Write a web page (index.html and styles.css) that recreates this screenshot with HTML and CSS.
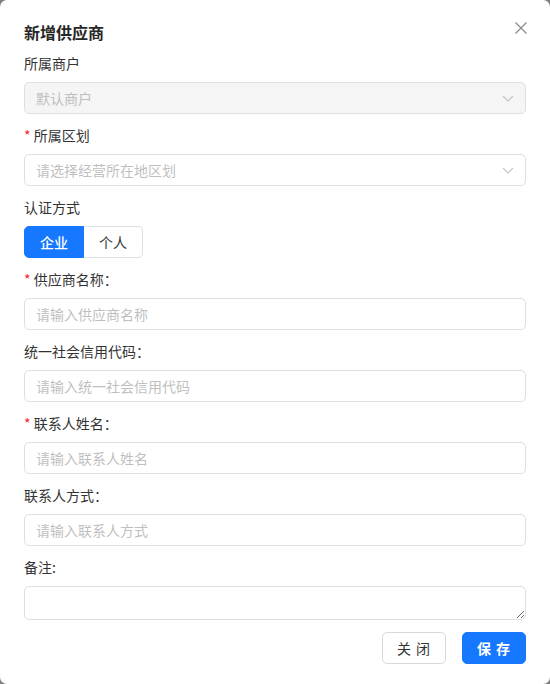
FILE: index.html
```html
<!DOCTYPE html>
<html lang="zh">
<head>
<meta charset="utf-8">
<title>新增供应商</title>
<link rel="stylesheet" href="styles.css">
</head>
<body>
<div class="dialog">
  <div class="header">
    <h1 class="title">新增供应商</h1>
    <button class="close" aria-label="关闭">
      <svg width="12" height="12" viewBox="0 0 12 12"><path d="M0.5 0.5L11.5 11.5M11.5 0.5L0.5 11.5" stroke="#8c8c8c" stroke-width="1.3" fill="none"/></svg>
    </button>
  </div>
  <form class="form">
    <div class="field">
      <label class="label">所属商户</label>
      <div class="select disabled">
        <span class="placeholder">默认商户</span>
        <svg class="chev" width="12" height="7" viewBox="0 0 12 7"><path d="M1 1L6 6L11 1" stroke="#c0c4cc" stroke-width="1.2" fill="none"/></svg>
      </div>
    </div>
    <div class="field">
      <label class="label"><span class="req">*</span> 所属区划</label>
      <div class="select">
        <span class="placeholder">请选择经营所在地区划</span>
        <svg class="chev" width="12" height="7" viewBox="0 0 12 7"><path d="M1 1L6 6L11 1" stroke="#c0c4cc" stroke-width="1.2" fill="none"/></svg>
      </div>
    </div>
    <div class="field">
      <label class="label">认证方式</label>
      <div class="radio-group">
        <span class="radio active">企业</span>
        <span class="radio">个人</span>
      </div>
    </div>
    <div class="field">
      <label class="label"><span class="req">*</span> 供应商名称：</label>
      <input class="input" placeholder="请输入供应商名称">
    </div>
    <div class="field">
      <label class="label">统一社会信用代码：</label>
      <input class="input" placeholder="请输入统一社会信用代码">
    </div>
    <div class="field">
      <label class="label"><span class="req">*</span> 联系人姓名：</label>
      <input class="input" placeholder="请输入联系人姓名">
    </div>
    <div class="field">
      <label class="label">联系人方式：</label>
      <input class="input" placeholder="请输入联系人方式">
    </div>
    <div class="field last">
      <label class="label">备注:</label>
      <textarea class="textarea"></textarea>
    </div>
    <div class="footer">
      <button type="button" class="btn">关 闭</button>
      <button type="button" class="btn primary">保 存</button>
    </div>
  </form>
</div>
</body>
</html>
```
FILE: styles.css
```css
* { box-sizing: border-box; }
html, body {
  margin: 0;
  padding: 0;
  background: #7f7f7f;
}
body {
  font-family: "Noto Sans CJK SC", "Noto Sans", sans-serif;
  color: #333;
  font-size: 14px;
}
.dialog {
  width: 550px;
  height: 684px;
  background: #fff;
  border-radius: 7px;
  padding: 20px 24px 20px 24px;
  display: flex;
  flex-direction: column;
}
.header {
  display: flex;
  justify-content: space-between;
  align-items: center;
  height: 24px;
  margin-bottom: 8px;
}
.title {
  margin: 0;
  font-size: 16px;
  font-weight: bold;
  line-height: 24px;
  color: #262626;
}
.close {
  border: 0;
  background: none;
  padding: 0;
  width: 12px;
  height: 12px;
  margin-right: -1px;
  margin-top: -8px;
  display: flex;
}
.form {
  display: flex;
  flex-direction: column;
}
.field {
  display: flex;
  flex-direction: column;
  margin-bottom: 10px;
}
.field.last { margin-bottom: 12px; }
.label {
  line-height: 22px;
  height: 22px;
  margin-bottom: 8px;
  font-size: 14px;
  color: #333;
}
.req {
  color: #f5222d;
}
.select, .input {
  height: 32px;
  border: 1px solid #dcdfe6;
  border-radius: 5px;
  background: #fff;
  padding: 0 12px 0 11px;
  font-size: 14px;
  font-family: inherit;
  color: #333;
}
.select {
  display: flex;
  align-items: center;
  justify-content: space-between;
}
.select.disabled {
  background: #f5f5f5;
}
.placeholder { color: #bfbfbf; }
.input::placeholder { color: #bfbfbf; }
.input { outline: none; width: 100%; }
.chev { margin-right: -1px; }
.radio-group {
  display: flex;
}
.radio {
  height: 32px;
  display: flex;
  align-items: center;
  justify-content: center;
  border: 1px solid #dcdfe6;
  font-size: 14px;
  color: #333;
}
.radio.active {
  width: 60px;
  background: #1677ff;
  border-color: #1677ff;
  color: #fff;
  font-weight: 500;
  border-radius: 5px 0 0 5px;
}
.radio:not(.active) {
  width: 59px;
  border-left: 0;
  border-radius: 0 5px 5px 0;
}
.textarea {
  height: 34px;
  border: 1px solid #dcdfe6;
  border-radius: 5px;
  resize: vertical;
  font-family: inherit;
  font-size: 14px;
  padding: 5px 12px;
  outline: none;
}
.footer {
  display: flex;
  justify-content: flex-end;
  gap: 16px;
}
.btn {
  width: 64px;
  height: 32px;
  border: 1px solid #d9d9d9;
  border-radius: 5px;
  background: #fff;
  color: #333;
  font-family: inherit;
  font-size: 14px;
  padding: 0;
  letter-spacing: 1px;
}
.btn.primary {
  background: #1677ff;
  border-color: #1677ff;
  color: #fff;
  font-weight: bold;
}
```
